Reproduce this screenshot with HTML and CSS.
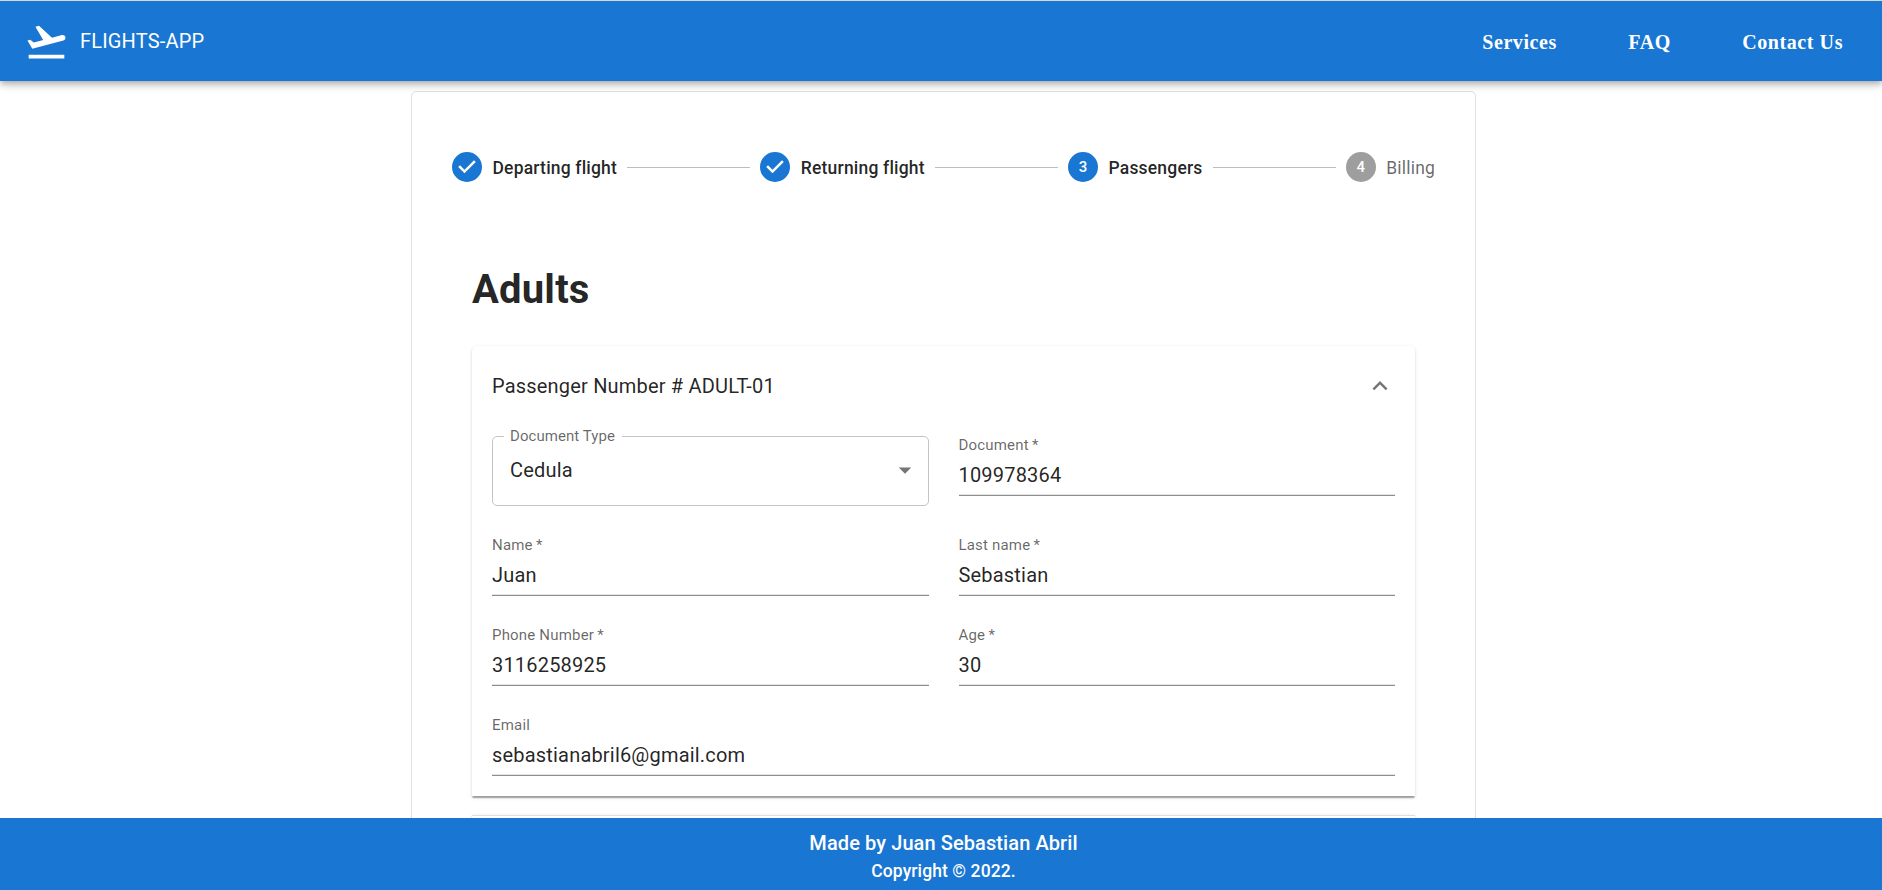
FILE: index.html
```html
<!DOCTYPE html>
<html lang="en">
<head>
<meta charset="utf-8">
<title>Flights App</title>
<link rel="stylesheet" href="styles.css">
</head>
<body>
<header class="appbar">
  <a class="brand">
    <svg class="brand-icon" viewBox="0 0 24 24"><path d="M2.5 19h19v2h-19v-2zm19.57-9.36c-.21-.8-1.04-1.28-1.84-1.06L14.92 10l-6.9-6.43-1.93.51 4.14 7.17-4.97 1.33-1.97-1.54-1.45.39 1.82 3.16.77 1.33L21 11.49c.81-.23 1.28-1.05 1.07-1.85z"/></svg>
    <span class="brand-name">FLIGHTS-APP</span>
  </a>
  <nav class="nav">
    <a>Services</a>
    <a>FAQ</a>
    <a>Contact Us</a>
  </nav>
</header>

<main class="page">
  <div class="card">
    <div class="stepper">
      <div class="step">
        <svg class="step-icon" viewBox="0 0 24 24"><path d="M12 0a12 12 0 1 0 0 24 12 12 0 0 0 0-24zm-2 17l-5-5 1.4-1.4 3.6 3.6 7.6-7.6L19 8l-9 9z"/></svg>
        <span class="step-label">Departing flight</span>
      </div>
      <div class="connector"></div>
      <div class="step">
        <svg class="step-icon" viewBox="0 0 24 24"><path d="M12 0a12 12 0 1 0 0 24 12 12 0 0 0 0-24zm-2 17l-5-5 1.4-1.4 3.6 3.6 7.6-7.6L19 8l-9 9z"/></svg>
        <span class="step-label">Returning flight</span>
      </div>
      <div class="connector"></div>
      <div class="step">
        <span class="step-number">3</span>
        <span class="step-label">Passengers</span>
      </div>
      <div class="connector"></div>
      <div class="step disabled">
        <span class="step-number">4</span>
        <span class="step-label">Billing</span>
      </div>
    </div>

    <section class="group">
      <h2 class="group-title">Adults</h2>
      <div class="accordion">
        <div class="summary">
          <span>Passenger Number # ADULT-01</span>
          <svg class="chevron" viewBox="0 0 24 24"><path d="M12 8l-6 6 1.41 1.41L12 10.83l4.59 4.58L18 14z"/></svg>
        </div>
        <form class="details">
          <fieldset class="select">
            <legend class="select-label">Document Type</legend>
            <div class="select-value">
              <span>Cedula</span>
              <svg class="arrow" viewBox="0 0 24 24"><path d="M7 10l5 5 5-5z"/></svg>
            </div>
          </fieldset>
          <div class="field"><span class="label">Document&thinsp;*</span><span class="value">109978364</span></div>
          <div class="field"><span class="label">Name&thinsp;*</span><span class="value">Juan</span></div>
          <div class="field"><span class="label">Last name&thinsp;*</span><span class="value">Sebastian</span></div>
          <div class="field"><span class="label">Phone Number&thinsp;*</span><span class="value">3116258925</span></div>
          <div class="field"><span class="label">Age&thinsp;*</span><span class="value">30</span></div>
          <div class="field wide"><span class="label">Email</span><span class="value">sebastianabril6@gmail.com</span></div>
        </form>
      </div>
      <div class="accordion next"></div>
    </section>
  </div>
</main>

<footer class="footer">
  <p class="author">Made by Juan Sebastian Abril</p>
  <p class="copyright">Copyright © 2022.</p>
</footer>
</body>
</html>
```

FILE: styles.css
```css
* { box-sizing: border-box; }

body {
  margin: 0;
  height: 890px;
  display: flex;
  flex-direction: column;
  overflow: hidden;
  border-top: 1px solid #d5d9de;
  background: #fff;
  color: rgba(0, 0, 0, 0.87);
  font: 400 20px/1.5 Roboto, sans-serif;
  letter-spacing: 0.00938em;
}

.appbar {
  flex: none;
  position: relative;
  z-index: 2;
  height: 80px;
  padding: 0 39px 0 23.5px;
  display: flex;
  align-items: center;
  justify-content: space-between;
  background: #1976d2;
  color: #fff;
  box-shadow: 0 2.5px 5px -1.25px rgba(0, 0, 0, 0.2), 0 5px 6.25px rgba(0, 0, 0, 0.14), 0 1.25px 12.5px rgba(0, 0, 0, 0.12);
}
.brand { display: flex; align-items: center; gap: 11.5px; }
.brand-icon { width: 45px; height: 45px; fill: #fff; }
.brand-name { letter-spacing: 0.0085em; }
.nav {
  display: flex;
  gap: 71.5px;
  padding-top: 1px;
  font: 700 20px/30px "Liberation Serif", serif;
  letter-spacing: 0.02857em;
}

.page {
  flex: 1;
  min-height: 0;
  overflow: hidden;
  padding: 10px 0 0 5px;
}
.card {
  width: 1065px;
  height: 900px;
  margin: 0 auto;
  padding: 60px 30px 0;
  border: 1px solid rgba(0, 0, 0, 0.12);
  border-radius: 5px;
}

.stepper { display: flex; align-items: center; padding: 0 10px; height: 30px; }
.step { display: flex; align-items: center; gap: 10.5px; }
.step-icon { width: 30px; height: 30px; fill: #1976d2; }
.step-number {
  width: 30px;
  height: 30px;
  border-radius: 50%;
  background: #1976d2;
  color: #fff;
  font-size: 15px;
  font-weight: 500;
  line-height: 30px;
  text-align: center;
}
.step-label { padding-top: 2px; font-size: 17.5px; line-height: 25px; font-weight: 500; letter-spacing: 0.01071em; }
.disabled .step-label { font-weight: 400; color: rgba(0, 0, 0, 0.6); }
.disabled .step-number { background: #9e9e9e; }
.connector { flex: 1; margin: 0 10px; border-top: 1px solid #bdbdbd; }

.group { padding: 78px 30px 0; }
.group-title { margin: 0 0 26px; font-size: 40px; line-height: 60px; font-weight: 700; }

.accordion {
  border-radius: 5px 5px 0 0;
  background: #fff;
  box-shadow: 0 2.5px 1.25px -1.25px rgba(0, 0, 0, 0.2), 0 1.25px 1.25px rgba(0, 0, 0, 0.14), 0 1.25px 3.75px rgba(0, 0, 0, 0.12);
}
.accordion.next {
  height: 80px;
  margin-top: 19px;
  border-top: 1px solid #dfdfdf;
  border-radius: 0;
}
.summary { height: 80px; padding: 0 20px; display: flex; align-items: center; justify-content: space-between; }
.chevron { width: 30px; height: 30px; fill: #757575; }
.details {
  display: grid;
  grid-template-columns: 1fr 1fr;
  gap: 30px;
  padding: 10px 20px 20px;
  align-items: start;
}

.select {
  height: 79px;
  min-width: 0;
  margin: -9px 0 0;
  padding: 0 8px 0 17px;
  border: 1px solid #c4c4c4;
  border-radius: 5px;
}
.select-label {
  margin-left: -6px;
  padding: 0 7px 0 6px;
  font-size: 15px;
  line-height: 18px;
  letter-spacing: 0.004em;
  color: rgba(0, 0, 0, 0.6);
}
.select-value { height: 50px; display: flex; align-items: center; justify-content: space-between; }
.arrow { width: 30px; height: 30px; fill: #757575; }

.field {
  height: 60px;
  display: flex;
  flex-direction: column;
  border-bottom: 1px solid #8e8e8e;
  box-shadow: inset 0 -1px #e4e4e4;
}
.wide { grid-column: 1 / -1; }
.label { font-size: 15px; line-height: 18px; color: rgba(0, 0, 0, 0.6); }
.value { margin-top: 7px; line-height: 29px; }

.footer {
  flex: none;
  position: relative;
  z-index: 2;
  height: 72px;
  padding: 10px 0 0 5px;
  background: #1976d2;
  color: #fff;
  text-align: center;
  font-weight: 500;
}
.author, .copyright { margin: 0; }
.author { line-height: 30px; letter-spacing: 0.0045em; }
.copyright { font-size: 17.5px; line-height: 26px; letter-spacing: 0.005em; }
```
